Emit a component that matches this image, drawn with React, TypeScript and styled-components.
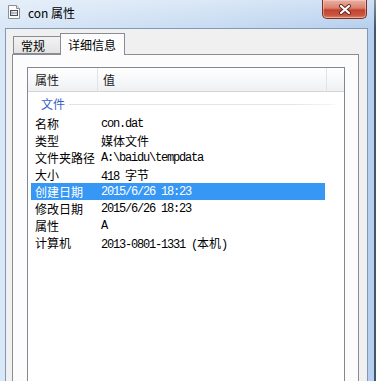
import React from 'react'
import styled, { createGlobalStyle } from 'styled-components';

const GlobalStyle = createGlobalStyle`
  html, body {
    margin: 0;
    padding: 0;
    background: #c4d9f1;
  }
  * {
    box-sizing: border-box;
  }
`;

const cjk = `"Noto Sans CJK SC", "Noto Sans", sans-serif`;

const Window = styled.div`
  width: 376px;
  height: 381px;
  overflow: hidden;
  display: flex;
  flex-direction: column;
  background: linear-gradient(to right, #d9e7f7 0%, #c8dcf2 55%, #b6cfee 100%);
  box-shadow: inset -2px 0 0 #44566c;
  font-family: ${cjk};
  font-size: 12px;
  color: #000;
`;

const TitleBar = styled.div`
  height: 28px;
  flex-shrink: 0;
  display: flex;
  align-items: flex-start;
  padding-left: 8px;
  background: linear-gradient(to bottom, rgba(255,255,255,0.35), rgba(255,255,255,0));
`;

const TitleIcon = styled.svg`
  width: 12px;
  height: 14px;
  margin-top: 5px;
  flex-shrink: 0;
`;

const TitleText = styled.span`
  margin-left: 8px;
  margin-top: 5px;
  line-height: 16px;
  font-size: 12px;
  color: #000;
  white-space: nowrap;
`;

const CloseButton = styled.div`
  margin-left: auto;
  margin-right: 9px;
  width: 45px;
  height: 19px;
  border: 1px solid #7a3128;
  border-top: 0;
  border-radius: 0 0 5px 5px;
  background: linear-gradient(to bottom, #eab1a4 0%, #d9806e 45%, #c2432f 55%, #c9563f 85%, #e08a6c 100%);
  box-shadow: inset 0 0 0 1px rgba(255, 220, 210, 0.45);
  display: flex;
  align-items: center;
  justify-content: center;
`;

const Body = styled.div`
  flex: 1;
  display: flex;
  padding: 0 8px 0 5px;
  min-height: 0;
`;

const Client = styled.div`
  flex: 1;
  display: flex;
  flex-direction: column;
  background: #f0f0f0;
  border: 1px solid #8299b4;
  border-bottom: 0;
  padding: 4px 8px 0 6px;
  min-height: 0;
`;

const TabStrip = styled.div`
  display: flex;
  align-items: flex-end;
  padding-left: 1px;
  position: relative;
  z-index: 1;
`;

const Tab = styled.div<{ $active?: boolean }>`
  height: ${p => (p.$active ? 22 : 18)}px;
  width: ${p => (p.$active ? 65 : 47)}px;
  margin-bottom: ${p => (p.$active ? -1 : 0)}px;
  padding-left: 7px;
  border: 1px solid #898c95;
  border-bottom: ${p => (p.$active ? '0' : '1px solid #898c95')};
  border-right: ${p => (p.$active ? '1px solid #898c95' : '0')};
  background: ${p => (p.$active ? '#fcfcfc' : 'linear-gradient(to bottom, #f3f3f3, #e3e3e3)')};
  display: flex;
  align-items: center;
  padding-top: ${p => (p.$active ? 0 : 1)}px;
  white-space: nowrap;
`;

const TabPanel = styled.div`
  flex: 1;
  display: flex;
  flex-direction: column;
  border: 1px solid #898c95;
  border-bottom: 0;
  background: #fcfcfc;
  padding: 12px 13px 0 14px;
  min-height: 0;
`;

const ListView = styled.div`
  flex: 1;
  display: flex;
  flex-direction: column;
  border: 1px solid #828790;
  border-bottom: 0;
  background: #fff;
`;

const Header = styled.div`
  height: 24px;
  flex-shrink: 0;
  display: flex;
  border-bottom: 1px solid #d5d5d5;
  background: linear-gradient(to bottom, #ffffff 0%, #f7f8f9 50%, #eff0f2 100%);
`;

const HeaderCell = styled.div<{ $width: number; $pad: number }>`
  width: ${p => p.$width}px;
  padding-left: ${p => p.$pad}px;
  border-right: 1px solid #e2e3e5;
  display: flex;
  align-items: center;
  color: #1a1a1a;
`;

const Group = styled.div`
  height: 23px;
  display: flex;
  align-items: center;
  padding-left: 13px;
  padding-right: 9px;
`;

const GroupLabel = styled.span`
  color: #3462c8;
`;

const GroupLine = styled.div`
  flex: 1;
  height: 1px;
  margin-left: 4px;
  margin-top: 1px;
  background: linear-gradient(to right, #dfe4eb 0%, #e3e7ed 85%, #f4f6f8 100%);
`;

const Row = styled.div<{ $selected?: boolean }>`
  height: 17px;
  width: 294px;
  margin-left: 3px;
  display: flex;
  align-items: center;
  background: ${p => (p.$selected ? '#3797f5' : 'transparent')};
  color: ${p => (p.$selected ? '#fff' : '#000')};
`;

const Label = styled.span`
  width: 70px;
  padding-left: 4px;
  white-space: nowrap;
  flex-shrink: 0;
`;

const Value = styled.span`
  font-family: "Liberation Mono", ${cjk};
  font-size: 12px;
  letter-spacing: -1.2px;
  white-space: pre;
`;

const Cjk = styled.span`
  font-family: ${cjk};
  letter-spacing: 0;
`;

interface Prop {
  label: string;
  value: React.ReactNode;
  selected?: boolean;
}

const props: Prop[] = [
  { label: '名称', value: 'con.dat' },
  { label: '类型', value: <Cjk>媒体文件</Cjk> },
  { label: '文件夹路径', value: 'A:\\baidu\\tempdata' },
  { label: '大小', value: <>418 <Cjk>字节</Cjk></> },
  { label: '创建日期', value: '2015/6/26 18:23', selected: true },
  { label: '修改日期', value: '2015/6/26 18:23' },
  { label: '属性', value: 'A' },
  { label: '计算机', value: <>2013-0801-1331 (<Cjk>本机</Cjk>)</> },
];

const App = () => {
  return (
    <Window>
      <GlobalStyle />
      <TitleBar>
        <TitleIcon viewBox="0 0 12 14">
          <path d="M0.5 0.5 H8.5 L11.5 3.5 V13.5 H0.5 Z" fill="#fdfdfd" stroke="#8a8f98" />
          <path d="M8.5 0.5 V3.5 H11.5" fill="#e8e8e8" stroke="#8a8f98" />
          <rect x="2.5" y="5.5" width="7" height="5" fill="#eef1f5" stroke="#4a4f58" />
          <line x1="3" y1="8" x2="9" y2="8" stroke="#7d8ba0" />
          <line x1="4" y1="6" x2="4" y2="10" stroke="#9aa5b5" strokeWidth="0.8" />
        </TitleIcon>
        <TitleText>con 属性</TitleText>
        <CloseButton>
          <svg width="14" height="11" viewBox="0 0 14 11">
            <path d="M3 2 L11 9 M11 2 L3 9" stroke="#5a2a22" strokeWidth="4" strokeLinecap="round" />
            <path d="M3 2 L11 9 M11 2 L3 9" stroke="#ffffff" strokeWidth="2.2" strokeLinecap="round" />
          </svg>
        </CloseButton>
      </TitleBar>
      <Body>
        <Client>
          <TabStrip>
            <Tab>常规</Tab>
            <Tab $active>详细信息</Tab>
          </TabStrip>
          <TabPanel>
            <ListView>
              <Header>
                <HeaderCell $width={70} $pad={7}>属性</HeaderCell>
                <HeaderCell $width={229} $pad={5}>值</HeaderCell>
              </Header>
              <Group>
                <GroupLabel>文件</GroupLabel>
                <GroupLine />
              </Group>
              {props.map(p => (
                <Row key={p.label} $selected={p.selected}>
                  <Label>{p.label}</Label>
                  <Value>{p.value}</Value>
                </Row>
              ))}
            </ListView>
          </TabPanel>
        </Client>
      </Body>
    </Window>
  )
}

export default App
